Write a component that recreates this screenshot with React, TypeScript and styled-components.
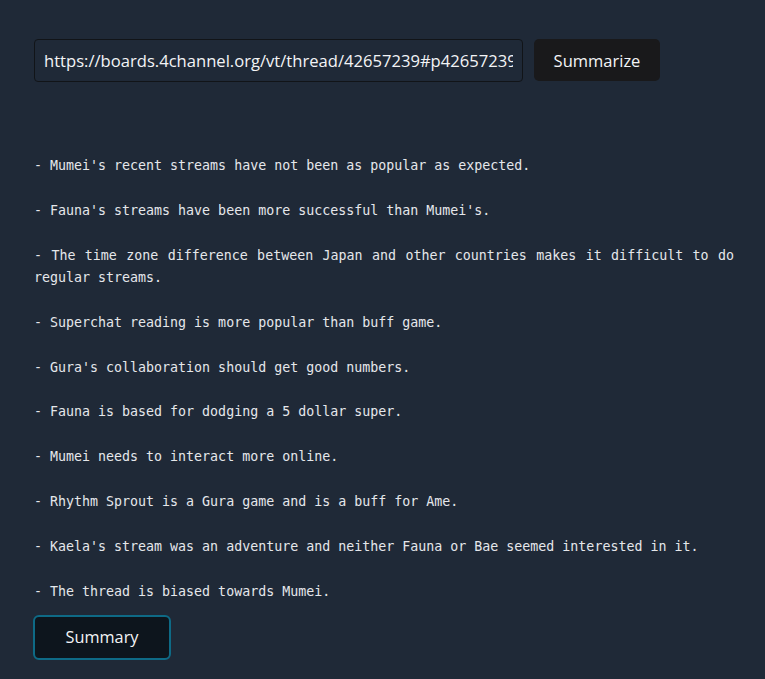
import React from "react";
import styled, { createGlobalStyle } from "styled-components";

const Global = createGlobalStyle`
  html, body { margin: 0; padding: 0; background: #1f2937; }
  body { font-family: "Open Sans", "Noto Sans", sans-serif; }
`;

const Page = styled.main`
  min-height: 679px;
  box-sizing: border-box;
  padding: 39px 31px 0 34px;
  background: #1f2937;
`;

const Form = styled.form`
  display: flex;
  align-items: flex-start;
  gap: 11px;
`;

const UrlInput = styled.input`
  width: 489px;
  height: 43px;
  box-sizing: border-box;
  padding: 0 9px;
  background: #1f2937;
  border: 1px solid #111418;
  border-radius: 4px;
  color: #f3f4f6;
  font-family: "Open Sans", "Noto Sans", sans-serif;
  font-size: 16.6px;
  outline: none;
`;

const DarkButton = styled.button`
  width: 126px;
  height: 42px;
  background: #19191b;
  border: none;
  border-radius: 5px;
  color: #f3f4f6;
  font-family: "Open Sans", "Noto Sans", sans-serif;
  font-size: 16.5px;
`;

const Summary = styled.section`
  margin-top: 73px;
  font-family: "DejaVu Sans Mono", "Liberation Mono", monospace;
  font-size: 13.3px;
  line-height: 22.4px;
  color: #e5e7eb;
  text-align: justify;
`;

const Item = styled.p`
  margin: 0 0 22.4px;
  &:last-child { margin-bottom: 0; }
`;

const SummaryButton = styled.button`
  margin-top: 12px;
  margin-left: -1px;
  width: 138px;
  height: 45px;
  background: #0d151d;
  border: 2px solid #0e6a86;
  border-radius: 6px;
  color: #f3f4f6;
  font-family: "Open Sans", "Noto Sans", sans-serif;
  font-size: 16.3px;
`;

const items = [
  "- Mumei's recent streams have not been as popular as expected.",
  "- Fauna's streams have been more successful than Mumei's.",
  "- The time zone difference between Japan and other countries makes it difficult to do regular streams.",
  "- Superchat reading is more popular than buff game.",
  "- Gura's collaboration should get good numbers.",
  "- Fauna is based for dodging a 5 dollar super.",
  "- Mumei needs to interact more online.",
  "- Rhythm Sprout is a Gura game and is a buff for Ame.",
  "- Kaela's stream was an adventure and neither Fauna or Bae seemed interested in it.",
  "- The thread is biased towards Mumei.",
];

export default function App() {
  return (
    <>
      <Global />
      <Page>
        <Form onSubmit={(e) => e.preventDefault()}>
          <UrlInput defaultValue="https://boards.4channel.org/vt/thread/42657239#p42657239" />
          <DarkButton type="submit">Summarize</DarkButton>
        </Form>
        <Summary>
          {items.map((t) => (
            <Item key={t}>{t}</Item>
          ))}
        </Summary>
        <SummaryButton type="button">Summary</SummaryButton>
      </Page>
    </>
  );
}
